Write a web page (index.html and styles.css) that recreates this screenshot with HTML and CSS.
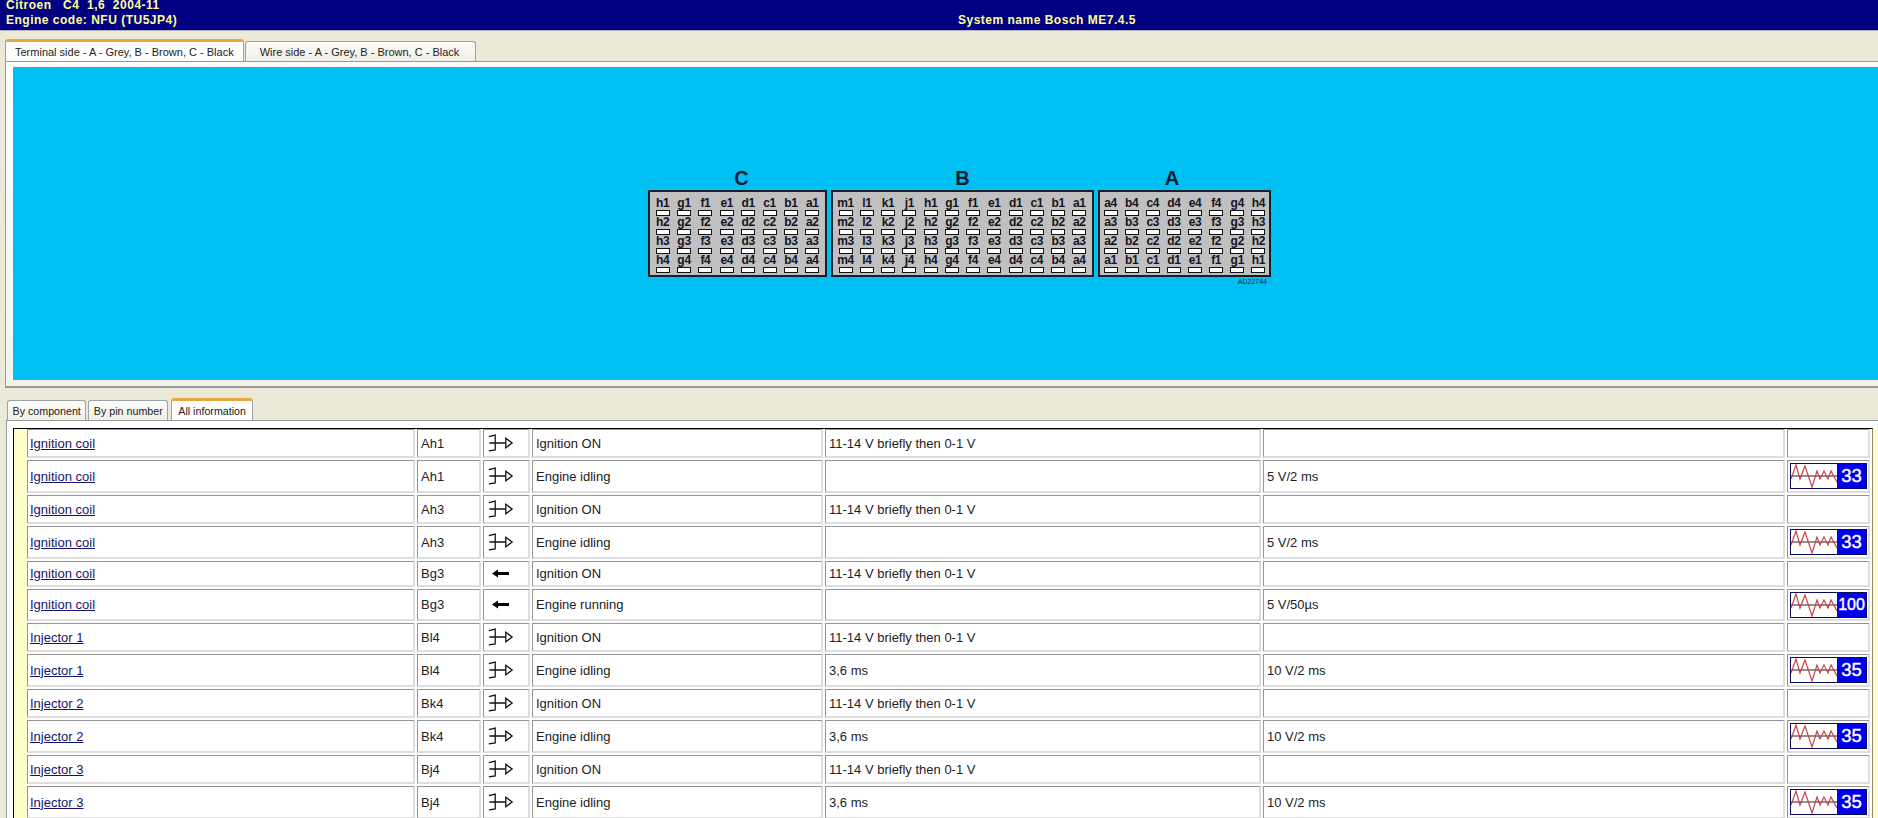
FILE: index.html
```html
<!DOCTYPE html>
<html lang="en">
<head>
<meta charset="utf-8">
<title>Bosch ME7.4.5</title>
<link rel="stylesheet" href="styles.css">
</head>
<body>
<svg class="defs" aria-hidden="true">
  <symbol id="out" viewBox="0 0 25 17">
    <path d="M1.5 2.5 L7.5 1 V15 L1.5 16 M2 8.5 H7.5 M7.5 8.5 H17.5" fill="none" stroke="#111" stroke-width="1.2"/>
    <path d="M17.5 4 L23.5 8.5 L17.5 13 Z" fill="#fff" stroke="#111" stroke-width="1.2"/>
  </symbol>
  <symbol id="in" viewBox="0 0 17 9">
    <path d="M0 4.5 L6 0.5 V3 H17 V6 H6 V8.5 Z" fill="#000"/>
  </symbol>
  <symbol id="wave" viewBox="0 0 46 24">
    <path d="M0 12 H46" stroke="#222" stroke-width="1" fill="none"/>
    <path d="M0 15 L5 1 L9 15 L14 2 L21 23 L26 7 L29 15 L33 7 L37 15 L40 7 L46 18" stroke="#c8424a" stroke-width="1.2" fill="none"/>
  </symbol>
</svg>

<header class="hdr">
  <div class="hdr-left">
    <div class="hdr-line">Citroen&nbsp;&nbsp;&nbsp;C4&nbsp;&nbsp;1,6&nbsp;&nbsp;2004-11</div>
    <div class="hdr-line">Engine code: NFU (TU5JP4)</div>
  </div>
  <div class="hdr-line">System name Bosch ME7.4.5</div>
</header>

<nav class="tabs tabs-top">
  <div class="tab tab-active">Terminal side - A - Grey, B - Brown, C - Black</div>
  <div class="tab">Wire side - A - Grey, B - Brown, C - Black</div>
</nav>

<section class="panel-top">
  <div class="canvas">
    <div class="connectors">
      <div class="conn conn-c">
        <div class="conn-label">C</div>
        <div class="block">
          <span class="pin">h1</span><span class="pin">g1</span><span class="pin">f1</span><span class="pin">e1</span><span class="pin">d1</span><span class="pin">c1</span><span class="pin">b1</span><span class="pin">a1</span>
          <span class="pin">h2</span><span class="pin">g2</span><span class="pin">f2</span><span class="pin">e2</span><span class="pin">d2</span><span class="pin">c2</span><span class="pin">b2</span><span class="pin">a2</span>
          <span class="pin">h3</span><span class="pin">g3</span><span class="pin">f3</span><span class="pin">e3</span><span class="pin">d3</span><span class="pin">c3</span><span class="pin">b3</span><span class="pin">a3</span>
          <span class="pin">h4</span><span class="pin">g4</span><span class="pin">f4</span><span class="pin">e4</span><span class="pin">d4</span><span class="pin">c4</span><span class="pin">b4</span><span class="pin">a4</span>
        </div>
      </div>
      <div class="conn conn-b">
        <div class="conn-label">B</div>
        <div class="block">
          <span class="pin">m1</span><span class="pin">l1</span><span class="pin">k1</span><span class="pin">j1</span><span class="pin">h1</span><span class="pin">g1</span><span class="pin">f1</span><span class="pin">e1</span><span class="pin">d1</span><span class="pin">c1</span><span class="pin">b1</span><span class="pin">a1</span>
          <span class="pin">m2</span><span class="pin">l2</span><span class="pin">k2</span><span class="pin">j2</span><span class="pin">h2</span><span class="pin">g2</span><span class="pin">f2</span><span class="pin">e2</span><span class="pin">d2</span><span class="pin">c2</span><span class="pin">b2</span><span class="pin">a2</span>
          <span class="pin">m3</span><span class="pin">l3</span><span class="pin">k3</span><span class="pin">j3</span><span class="pin">h3</span><span class="pin">g3</span><span class="pin">f3</span><span class="pin">e3</span><span class="pin">d3</span><span class="pin">c3</span><span class="pin">b3</span><span class="pin">a3</span>
          <span class="pin">m4</span><span class="pin">l4</span><span class="pin">k4</span><span class="pin">j4</span><span class="pin">h4</span><span class="pin">g4</span><span class="pin">f4</span><span class="pin">e4</span><span class="pin">d4</span><span class="pin">c4</span><span class="pin">b4</span><span class="pin">a4</span>
        </div>
      </div>
      <div class="conn conn-a">
        <div class="conn-label">A</div>
        <div class="block">
          <span class="pin">a4</span><span class="pin">b4</span><span class="pin">c4</span><span class="pin">d4</span><span class="pin">e4</span><span class="pin">f4</span><span class="pin">g4</span><span class="pin">h4</span>
          <span class="pin">a3</span><span class="pin">b3</span><span class="pin">c3</span><span class="pin">d3</span><span class="pin">e3</span><span class="pin">f3</span><span class="pin">g3</span><span class="pin">h3</span>
          <span class="pin">a2</span><span class="pin">b2</span><span class="pin">c2</span><span class="pin">d2</span><span class="pin">e2</span><span class="pin">f2</span><span class="pin">g2</span><span class="pin">h2</span>
          <span class="pin">a1</span><span class="pin">b1</span><span class="pin">c1</span><span class="pin">d1</span><span class="pin">e1</span><span class="pin">f1</span><span class="pin">g1</span><span class="pin">h1</span>
        </div>
        <div class="ref-code">AD22744</div>
      </div>
    </div>
  </div>
</section>

<nav class="tabs tabs-bottom">
  <div class="tab">By component</div>
  <div class="tab">By pin number</div>
  <div class="tab tab-active">All information</div>
</nav>

<section class="panel-bottom">
  <div class="frame">
    <div class="frame-inner">
      <div class="grid">
        <div class="c"><a class="lnk" href="#">Ignition coil</a></div><div class="c">Ah1</div><div class="c c-ic"><svg class="ic-out"><use href="#out"/></svg></div><div class="c">Ignition ON</div><div class="c">11-14 V briefly then 0-1 V</div><div class="c"></div><div class="c"></div>
        <div class="c"><a class="lnk" href="#">Ignition coil</a></div><div class="c">Ah1</div><div class="c c-ic"><svg class="ic-out"><use href="#out"/></svg></div><div class="c">Engine idling</div><div class="c"></div><div class="c">5 V/2 ms</div><div class="c c-scope"><div class="scope"><svg class="wave"><use href="#wave"/></svg><span class="num">33</span></div></div>
        <div class="c"><a class="lnk" href="#">Ignition coil</a></div><div class="c">Ah3</div><div class="c c-ic"><svg class="ic-out"><use href="#out"/></svg></div><div class="c">Ignition ON</div><div class="c">11-14 V briefly then 0-1 V</div><div class="c"></div><div class="c"></div>
        <div class="c"><a class="lnk" href="#">Ignition coil</a></div><div class="c">Ah3</div><div class="c c-ic"><svg class="ic-out"><use href="#out"/></svg></div><div class="c">Engine idling</div><div class="c"></div><div class="c">5 V/2 ms</div><div class="c c-scope"><div class="scope"><svg class="wave"><use href="#wave"/></svg><span class="num">33</span></div></div>
        <div class="c"><a class="lnk" href="#">Ignition coil</a></div><div class="c">Bg3</div><div class="c c-ic"><svg class="ic-in"><use href="#in"/></svg></div><div class="c">Ignition ON</div><div class="c">11-14 V briefly then 0-1 V</div><div class="c"></div><div class="c"></div>
        <div class="c"><a class="lnk" href="#">Ignition coil</a></div><div class="c">Bg3</div><div class="c c-ic"><svg class="ic-in"><use href="#in"/></svg></div><div class="c">Engine running</div><div class="c"></div><div class="c">5 V/50µs</div><div class="c c-scope"><div class="scope"><svg class="wave"><use href="#wave"/></svg><span class="num num-small">100</span></div></div>
        <div class="c"><a class="lnk" href="#">Injector 1</a></div><div class="c">Bl4</div><div class="c c-ic"><svg class="ic-out"><use href="#out"/></svg></div><div class="c">Ignition ON</div><div class="c">11-14 V briefly then 0-1 V</div><div class="c"></div><div class="c"></div>
        <div class="c"><a class="lnk" href="#">Injector 1</a></div><div class="c">Bl4</div><div class="c c-ic"><svg class="ic-out"><use href="#out"/></svg></div><div class="c">Engine idling</div><div class="c">3,6 ms</div><div class="c">10 V/2 ms</div><div class="c c-scope"><div class="scope"><svg class="wave"><use href="#wave"/></svg><span class="num">35</span></div></div>
        <div class="c"><a class="lnk" href="#">Injector 2</a></div><div class="c">Bk4</div><div class="c c-ic"><svg class="ic-out"><use href="#out"/></svg></div><div class="c">Ignition ON</div><div class="c">11-14 V briefly then 0-1 V</div><div class="c"></div><div class="c"></div>
        <div class="c"><a class="lnk" href="#">Injector 2</a></div><div class="c">Bk4</div><div class="c c-ic"><svg class="ic-out"><use href="#out"/></svg></div><div class="c">Engine idling</div><div class="c">3,6 ms</div><div class="c">10 V/2 ms</div><div class="c c-scope"><div class="scope"><svg class="wave"><use href="#wave"/></svg><span class="num">35</span></div></div>
        <div class="c"><a class="lnk" href="#">Injector 3</a></div><div class="c">Bj4</div><div class="c c-ic"><svg class="ic-out"><use href="#out"/></svg></div><div class="c">Ignition ON</div><div class="c">11-14 V briefly then 0-1 V</div><div class="c"></div><div class="c"></div>
        <div class="c"><a class="lnk" href="#">Injector 3</a></div><div class="c">Bj4</div><div class="c c-ic"><svg class="ic-out"><use href="#out"/></svg></div><div class="c">Engine idling</div><div class="c">3,6 ms</div><div class="c">10 V/2 ms</div><div class="c c-scope"><div class="scope"><svg class="wave"><use href="#wave"/></svg><span class="num">35</span></div></div>
      </div>
    </div>
    <div class="frame-end"></div>
  </div>
</section>
</body>
</html>
```
FILE: styles.css
```css
* { box-sizing: border-box; }
html, body { margin: 0; height: 818px; overflow: hidden; }
body {
  background: #ece9d8;
  font-family: "Liberation Sans", Arial, sans-serif;
  font-size: 13px;
  color: #222;
}
.defs { width: 0; height: 0; display: block; overflow: hidden; }

.hdr {
  height: 31px;
  background: #000080;
  border-bottom: 1px solid #b4b4c8;
  display: flex;
  align-items: flex-end;
  color: #ffff99;
  font-weight: bold;
  font-size: 12px;
  letter-spacing: 0.5px;
  line-height: 15px;
  overflow: hidden;
  padding-bottom: 2px;
}
.hdr-left { width: 958px; padding-left: 6px; flex: none; }

.tabs { display: flex; align-items: flex-end; }
.tab {
  height: 20px;
  display: flex;
  align-items: center;
  background: linear-gradient(#fdfdfb, #f0eee4);
  border: 1px solid #9aa2a6;
  border-bottom: none;
  border-radius: 3px 3px 0 0;
  color: #222;
}
.tab-active {
  background: #fff;
  border-top: 3px solid #e9a83f;
  border-left-color: #9aa2a6;
}
.tabs-top { height: 30px; padding-left: 5px; font-size: 11px; }
.tabs-top .tab { padding: 0 16px 0 14px; margin-right: 1px; }
.tabs-top .tab-active { height: 22px; padding: 0 9px; }

.panel-top {
  height: 327px;
  margin-left: 5px;
  background: linear-gradient(#fff, #f3f3ee);
  border-top: 1px solid #919b9c;
  border-left: 1px solid #919b9c;
  border-bottom: 2px solid #9a9a92;
  padding: 5px 0 6px 7px;
}
.canvas {
  height: 100%;
  background: #00bff3;
  border-top: 1px solid #4f9fb4;
  border-left: 1px solid #5c9fb0;
}

.connectors {
  padding-top: 95px;
  padding-left: 634px;
  display: flex;
  gap: 4px;
  align-items: flex-start;
}
.conn-c { width: 179px; }
.conn-b { width: 263px; }
.conn-a { width: 173px; }
.conn-label {
  height: 28px;
  line-height: 30px;
  text-align: center;
  font-size: 20px;
  font-weight: bold;
  color: #0a1c33;
  margin-bottom: -1px;
}
.conn-c .conn-label { padding-left: 8px; }
.conn-a .conn-label { padding-right: 25px; }
.block {
  height: 87px;
  background: #c0c0c0;
  border: 2px solid #14202c;
  padding: 5px 2px 3px;
  display: grid;
  grid-template-columns: repeat(8, 1fr);
  grid-auto-rows: 19px;
  justify-items: center;
}
.conn-b .block { grid-template-columns: repeat(12, 1fr); }
.conn-a .block { padding: 5px 0 3px; }
.pin {
  width: 14px;
  height: 19px;
  font-size: 12px;
  font-weight: bold;
  line-height: 13px;
  color: #14141e;
  text-align: center;
  display: flex;
  flex-direction: column;
  align-items: center;
  white-space: nowrap;
  letter-spacing: -0.3px;
}
.pin::after {
  content: "";
  display: block;
  flex: none;
  width: 12px;
  height: 4px;
  background: #fff;
  border: 1px solid #111;
}
.ref-code {
  text-align: right;
  font-size: 7px;
  line-height: 10px;
  color: #223;
  padding-right: 4px;
}

.tabs-bottom { height: 32px; padding-left: 7px; font-size: 10.7px; gap: 2px; }
.tabs-bottom .tab { padding: 0 4.5px; }
.tabs-bottom .tab-active { height: 22px; padding: 0 6px; margin-left: 1px; }

.panel-bottom {
  margin-left: 6px;
  background: #fff;
  border-top: 1px solid #919b9c;
  border-left: 1px solid #919b9c;
  padding: 7px 0 0 6px;
  height: 400px;
}
.frame { display: flex; align-items: flex-start; height: 400px; }
.frame-inner {
  width: 1860px;
  flex: none;
  background: #ffffcc;
  border-top: 1px solid #000;
  border-left: 1px solid #000;
  border-right: 1px solid #8a8a7a;
  padding-left: 13px;
  height: 400px;
}
.frame-end { flex: 1; height: 400px; margin-top: 1px; background: #ffffcc; }
.grid {
  background: #fff;
  display: grid;
  grid-template-columns: 388px 64px 47px 291px 436px 522px 83px;
  grid-template-rows: 29px 33px 29px 33px 26px 32px 29px 33px 29px 33px 29px 33px;
  gap: 2px;
  padding-right: 2px;
  height: 400px;
  align-content: start;
}
.c {
  display: flex;
  align-items: center;
  padding-left: 3px;
  background: #fff;
  border-top: 1px solid #949494;
  border-left: 1px solid #949494;
  border-right: 2px solid #dedede;
  border-bottom: 2px solid #dedede;
  white-space: nowrap;
}
.lnk { color: #14146e; margin-left: -1px; }
.c-ic { padding-left: 3px; }
.ic-out { width: 27px; height: 18px; }
.ic-in { width: 17px; height: 9px; margin-left: 5px; }
.c-scope { padding-left: 2px; }
.scope {
  width: 77px;
  height: 26px;
  border: 1px solid #0a0a60;
  background: #fff;
  display: flex;
  align-items: stretch;
}
.wave { width: 46px; height: 24px; flex: none; }
.num {
  flex: 1;
  background: #0000ee;
  color: #fff;
  font-size: 18.5px;
  -webkit-text-stroke: 0.4px #fff;
  line-height: 24px;
  text-align: center;
}
.num-small { font-size: 16px; }
```
